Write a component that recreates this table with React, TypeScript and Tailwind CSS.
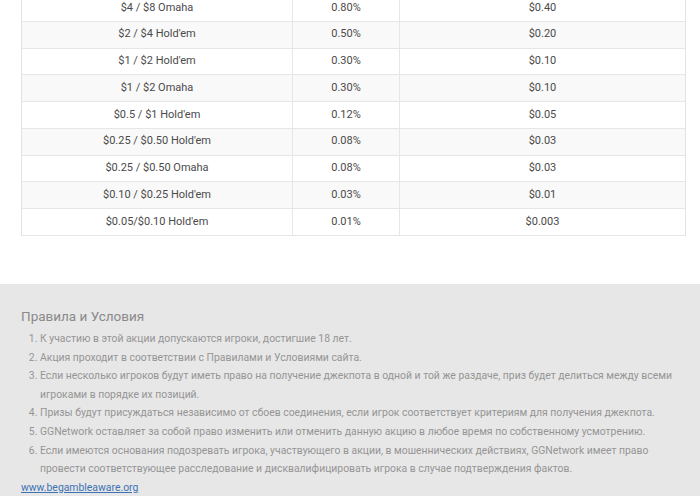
const rows = [
  ['$4 / $8 Omaha', '0.80%', '$0.40'],
  ["$2 / $4 Hold'em", '0.50%', '$0.20'],
  ["$1 / $2 Hold'em", '0.30%', '$0.10'],
  ['$1 / $2 Omaha', '0.30%', '$0.10'],
  ["$0.5 / $1 Hold'em", '0.12%', '$0.05'],
  ["$0.25 / $0.50 Hold'em", '0.08%', '$0.03'],
  ['$0.25 / $0.50 Omaha', '0.08%', '$0.03'],
  ["$0.10 / $0.25 Hold'em", '0.03%', '$0.01'],
  ["$0.05/$0.10 Hold'em", '0.01%', '$0.003'],
];

const rules = [
  'К участию в этой акции допускаются игроки, достигшие 18 лет.',
  'Акция проходит в соответствии с Правилами и Условиями сайта.',
  'Если несколько игроков будут иметь право на получение джекпота в одной и той же раздаче, приз будет делиться между всеми игроками в порядке их позиций.',
  'Призы будут присуждаться независимо от сбоев соединения, если игрок соответствует критериям для получения джекпота.',
  'GGNetwork оставляет за собой право изменить или отменить данную акцию в любое время по собственному усмотрению.',
  'Если имеются основания подозревать игрока, участвующего в акции, в мошеннических действиях, GGNetwork имеет право провести соответствующее расследование и дисквалифицировать игрока в случае подтверждения фактов.',
];

export default function App() {
  return (
    <div className="w-[700px] h-[496px] overflow-hidden bg-white font-['Roboto',sans-serif] flex flex-col">
      <div className="h-[284px] shrink-0 flex flex-col">
        <div className="ml-[21px] w-[665px] mt-[-5px] border-x border-[#e3e3e3]">
          {rows.map((r, i) => (
            <div
              key={i}
              className={`grid grid-cols-[271px_107px_1fr] h-[26.75px] border-b border-[#e6e6e6] text-[11px] text-[#4a4a4a] ${
                i % 2 === 1 ? 'bg-[#f9f9f9]' : 'bg-white'
              }`}
            >
              <div className="flex items-center justify-center border-r border-[#e6e6e6]">{r[0]}</div>
              <div className="flex items-center justify-center border-r border-[#e6e6e6]">{r[1]}</div>
              <div className="flex items-center justify-center">{r[2]}</div>
            </div>
          ))}
        </div>
      </div>

      <div className="bg-[#e7e7e7] flex-1 pl-[21px] pr-[14px] pt-[23px]">
        <h3 className="text-[13.5px] text-[#8a8a8a] leading-[18px]">Правила и Условия</h3>
        <ol className="list-decimal pl-[19px] mt-[5px] text-[10.4px] leading-[18.6px] text-[#959595]">
          {rules.map((t, i) => (
            <li key={i}>{t}</li>
          ))}
        </ol>
        <a href="#" className="block text-[10.4px] leading-[18px] text-[#3d72b4] underline">
          www.begambleaware.org
        </a>
      </div>
    </div>
  );
}
